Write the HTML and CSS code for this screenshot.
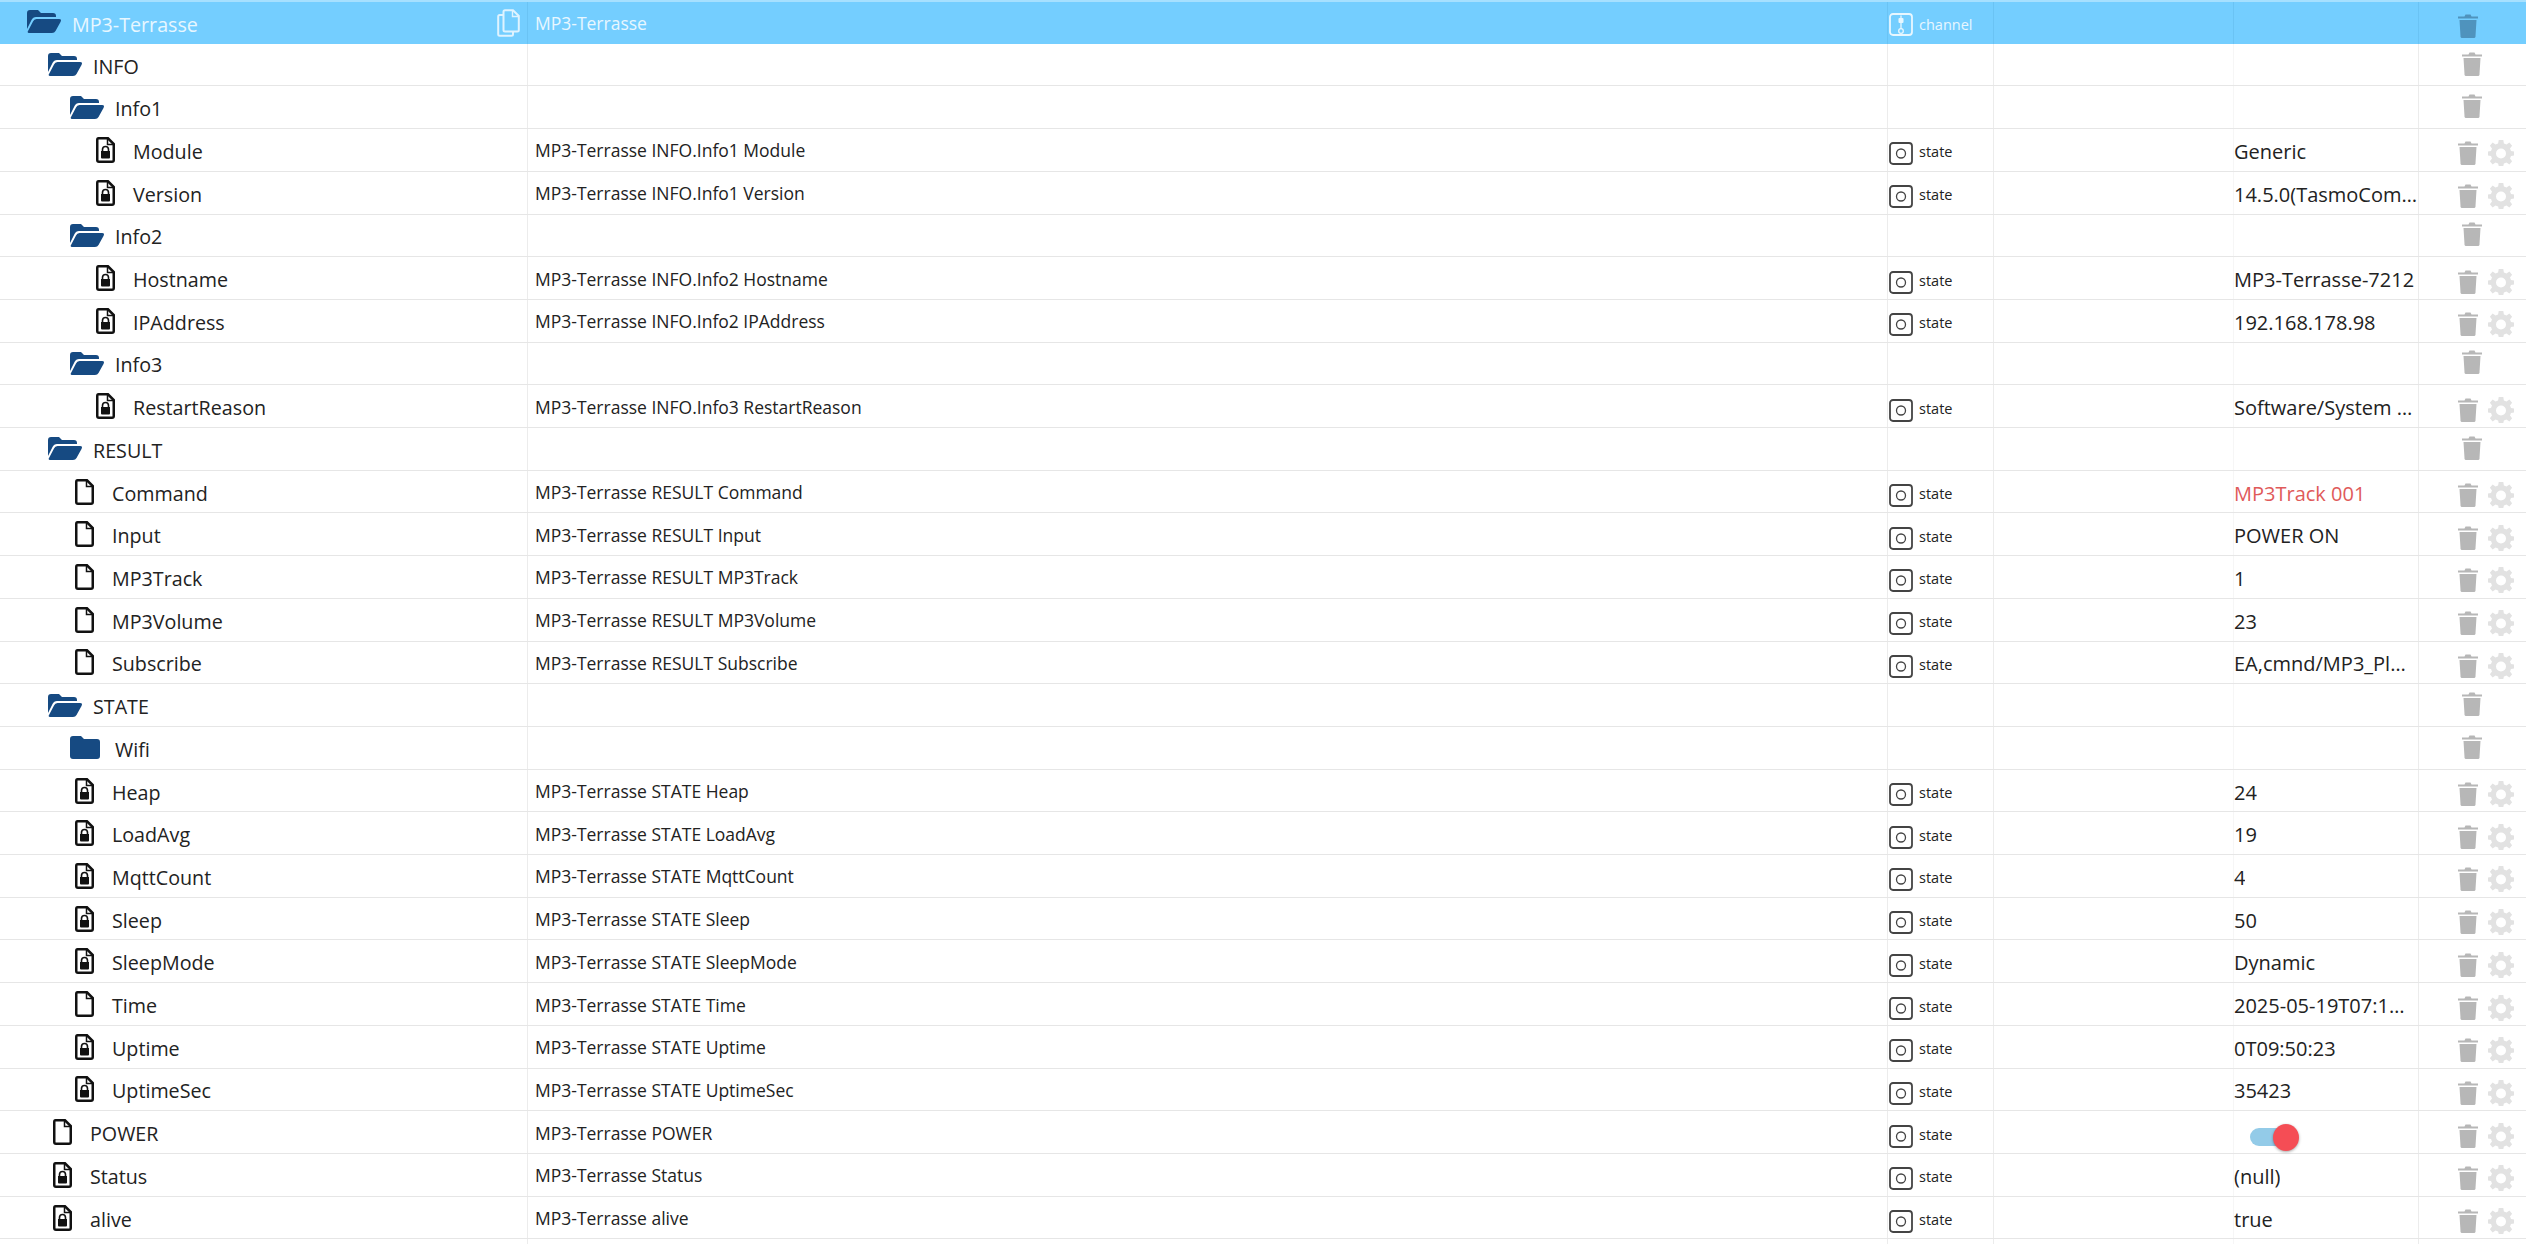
FILE: index.html
```html
<!DOCTYPE html>
<html lang="en">
<head>
<meta charset="utf-8">
<title>Objects</title>
<link rel="stylesheet" href="styles.css">
</head>
<body>
<svg class="defs" width="0" height="0" aria-hidden="true">
  <symbol id="folder-open" viewBox="0 0 34 23"><path d="M0 3Q0 0 3 0H11L14 3H26Q29 3 29 6V7H9Q6 7 4.500 10L0 19Z"/><path d="M9.500 9H32Q35 9 33.500 12L28.500 21Q27.500 23 25 23H2Q0 23 1 21L6 11.500Q7 9 9.500 9Z"/></symbol>
  <symbol id="folder" viewBox="0 0 30 23"><path d="M0 3Q0 0 3 0H11L14 3H27Q30 3 30 6V20Q30 23 27 23H3Q0 23 0 20Z"/></symbol>
  <symbol id="file" viewBox="0 0 19 26"><path d="M2.500 1.250H12L17.750 7V23Q17.750 24.750 16 24.750H3Q1.250 24.750 1.250 23V3Q1.250 1.250 2.500 1.250Z" fill="none" stroke="currentColor" stroke-width="2.500"/><path d="M11.500 1.500V7.500H17.500" fill="none" stroke="currentColor" stroke-width="1.500"/></symbol>
  <symbol id="file-lock" viewBox="0 0 19 26"><path d="M2.500 1.250H12L17.750 7V23Q17.750 24.750 16 24.750H3Q1.250 24.750 1.250 23V3Q1.250 1.250 2.500 1.250Z" fill="none" stroke="currentColor" stroke-width="2.500"/><path d="M11.500 1.500V7.500H17.500" fill="none" stroke="currentColor" stroke-width="1.500"/><path d="M6.500 14V12.500Q6.500 9.500 9.500 9.500T12.500 12.500V14" fill="none" stroke="currentColor" stroke-width="1.600"/><path d="M5 14H14V20.500Q14 21.500 13 21.500H6Q5 21.500 5 20.500Z"/></symbol>
  <symbol id="state" viewBox="0 0 24 23"><rect x="1" y="1" width="22" height="21" rx="3" fill="none" stroke="currentColor" stroke-width="1.800"/><ellipse cx="12" cy="11.500" rx="4.500" ry="4.500" fill="none" stroke="currentColor" stroke-width="1.300"/></symbol>
  <symbol id="channel" viewBox="0 0 24 23"><rect x="1" y="1" width="22" height="21" rx="3" fill="none" stroke="currentColor" stroke-width="1.800"/><path d="M12 2.500V16" fill="none" stroke="currentColor" stroke-width="1.300"/><rect x="9.500" y="5" width="5" height="5" rx="1"/><circle cx="12" cy="18" r="2.300" fill="none" stroke="currentColor" stroke-width="1.300"/></symbol>
  <symbol id="trash" viewBox="0 0 20 25"><path d="M0 3.500H6.500L7.500 1.500H12.500L13.500 3.500H20V5.500H0Z"/><path d="M1.500 7H18.500L17.500 23.500Q17.400 25 16 25H4Q2.600 25 2.500 23.500Z"/></symbol>
  <symbol id="gear" viewBox="0 0 26 26"><path fill-rule="evenodd" d="M10.700 0H15.300L15.900 3.500 18.500 4.600 21.400 2.500 24.100 5.700 22 8.500 23 11 26 11.500V15.500L23 16 22 18.500 24.100 21.300 21.400 24.500 18.500 22.400 15.900 23.500 15.300 26H10.700L10.100 23.500 7.500 22.400 4.600 24.500 1.900 21.300 4 18.500 3 16 0 15.500V11.500L3 11 4 8.500 1.900 5.700 4.600 2.500 7.500 4.600 10.100 3.500ZM13 8.500A5 5 0 1 0 13 18.500 5 5 0 1 0 13 8.500Z"/></symbol>
  <symbol id="copy" viewBox="0 0 23 28"><path d="M8 1.200H16L21.800 7V21Q21.800 22.500 20.300 22.500H8Q6.500 22.500 6.500 21V2.700Q6.500 1.200 8 1.200Z" fill="none" stroke="currentColor" stroke-width="2"/><path d="M15.500 1.500V7.500H21.500" fill="none" stroke="currentColor" stroke-width="1.400"/><path d="M6.500 6H2.700Q1.200 6 1.200 7.500V25.300Q1.200 26.800 2.700 26.800H14.500Q16 26.800 16 25.300V22.500" fill="none" stroke="currentColor" stroke-width="2"/></symbol>
</svg>
<main class="tree">
  <div class="row row-selected">
    <div class="cell cell-name lvl-0"><svg class="ico ico-folder-open"><use href="#folder-open"/></svg><span>MP3-Terrasse</span><svg class="ico ico-copy"><use href="#copy"/></svg></div>
    <div class="cell cell-desc">MP3-Terrasse</div>
    <div class="cell cell-type"><svg class="ico ico-type"><use href="#channel"/></svg><span>channel</span></div>
    <div class="cell"></div><div class="cell"></div>
    <div class="cell cell-act"><svg class="ico ico-trash"><use href="#trash"/></svg></div>
  </div>
  <div class="row">
    <div class="cell cell-name lvl-1"><svg class="ico ico-folder-open"><use href="#folder-open"/></svg><span>INFO</span></div>
    <div class="cell"></div><div class="cell"></div><div class="cell"></div><div class="cell"></div>
    <div class="cell cell-act cell-act-folder"><svg class="ico ico-trash"><use href="#trash"/></svg></div>
  </div>
  <div class="row">
    <div class="cell cell-name lvl-2"><svg class="ico ico-folder-open"><use href="#folder-open"/></svg><span>Info1</span></div>
    <div class="cell"></div><div class="cell"></div><div class="cell"></div><div class="cell"></div>
    <div class="cell cell-act cell-act-folder"><svg class="ico ico-trash"><use href="#trash"/></svg></div>
  </div>
  <div class="row">
    <div class="cell cell-name file-3"><svg class="ico ico-file"><use href="#file-lock"/></svg><span>Module</span></div>
    <div class="cell cell-desc">MP3-Terrasse INFO.Info1 Module</div>
    <div class="cell cell-type"><svg class="ico ico-type"><use href="#state"/></svg><span>state</span></div>
    <div class="cell"></div><div class="cell cell-val"><span>Generic</span></div>
    <div class="cell cell-act"><svg class="ico ico-trash"><use href="#trash"/></svg><svg class="ico ico-gear"><use href="#gear"/></svg></div>
  </div>
  <div class="row">
    <div class="cell cell-name file-3"><svg class="ico ico-file"><use href="#file-lock"/></svg><span>Version</span></div>
    <div class="cell cell-desc">MP3-Terrasse INFO.Info1 Version</div>
    <div class="cell cell-type"><svg class="ico ico-type"><use href="#state"/></svg><span>state</span></div>
    <div class="cell"></div><div class="cell cell-val"><span>14.5.0(TasmoCompiled)</span></div>
    <div class="cell cell-act"><svg class="ico ico-trash"><use href="#trash"/></svg><svg class="ico ico-gear"><use href="#gear"/></svg></div>
  </div>
  <div class="row">
    <div class="cell cell-name lvl-2"><svg class="ico ico-folder-open"><use href="#folder-open"/></svg><span>Info2</span></div>
    <div class="cell"></div><div class="cell"></div><div class="cell"></div><div class="cell"></div>
    <div class="cell cell-act cell-act-folder"><svg class="ico ico-trash"><use href="#trash"/></svg></div>
  </div>
  <div class="row">
    <div class="cell cell-name file-3"><svg class="ico ico-file"><use href="#file-lock"/></svg><span>Hostname</span></div>
    <div class="cell cell-desc">MP3-Terrasse INFO.Info2 Hostname</div>
    <div class="cell cell-type"><svg class="ico ico-type"><use href="#state"/></svg><span>state</span></div>
    <div class="cell"></div><div class="cell cell-val"><span>MP3-Terrasse-7212</span></div>
    <div class="cell cell-act"><svg class="ico ico-trash"><use href="#trash"/></svg><svg class="ico ico-gear"><use href="#gear"/></svg></div>
  </div>
  <div class="row">
    <div class="cell cell-name file-3"><svg class="ico ico-file"><use href="#file-lock"/></svg><span>IPAddress</span></div>
    <div class="cell cell-desc">MP3-Terrasse INFO.Info2 IPAddress</div>
    <div class="cell cell-type"><svg class="ico ico-type"><use href="#state"/></svg><span>state</span></div>
    <div class="cell"></div><div class="cell cell-val"><span>192.168.178.98</span></div>
    <div class="cell cell-act"><svg class="ico ico-trash"><use href="#trash"/></svg><svg class="ico ico-gear"><use href="#gear"/></svg></div>
  </div>
  <div class="row">
    <div class="cell cell-name lvl-2"><svg class="ico ico-folder-open"><use href="#folder-open"/></svg><span>Info3</span></div>
    <div class="cell"></div><div class="cell"></div><div class="cell"></div><div class="cell"></div>
    <div class="cell cell-act cell-act-folder"><svg class="ico ico-trash"><use href="#trash"/></svg></div>
  </div>
  <div class="row">
    <div class="cell cell-name file-3"><svg class="ico ico-file"><use href="#file-lock"/></svg><span>RestartReason</span></div>
    <div class="cell cell-desc">MP3-Terrasse INFO.Info3 RestartReason</div>
    <div class="cell cell-type"><svg class="ico ico-type"><use href="#state"/></svg><span>state</span></div>
    <div class="cell"></div><div class="cell cell-val"><span>Software/System restart</span></div>
    <div class="cell cell-act"><svg class="ico ico-trash"><use href="#trash"/></svg><svg class="ico ico-gear"><use href="#gear"/></svg></div>
  </div>
  <div class="row">
    <div class="cell cell-name lvl-1"><svg class="ico ico-folder-open"><use href="#folder-open"/></svg><span>RESULT</span></div>
    <div class="cell"></div><div class="cell"></div><div class="cell"></div><div class="cell"></div>
    <div class="cell cell-act cell-act-folder"><svg class="ico ico-trash"><use href="#trash"/></svg></div>
  </div>
  <div class="row">
    <div class="cell cell-name file-2"><svg class="ico ico-file"><use href="#file"/></svg><span>Command</span></div>
    <div class="cell cell-desc">MP3-Terrasse RESULT Command</div>
    <div class="cell cell-type"><svg class="ico ico-type"><use href="#state"/></svg><span>state</span></div>
    <div class="cell"></div><div class="cell cell-val cell-val-alert"><span>MP3Track 001</span></div>
    <div class="cell cell-act"><svg class="ico ico-trash"><use href="#trash"/></svg><svg class="ico ico-gear"><use href="#gear"/></svg></div>
  </div>
  <div class="row">
    <div class="cell cell-name file-2"><svg class="ico ico-file"><use href="#file"/></svg><span>Input</span></div>
    <div class="cell cell-desc">MP3-Terrasse RESULT Input</div>
    <div class="cell cell-type"><svg class="ico ico-type"><use href="#state"/></svg><span>state</span></div>
    <div class="cell"></div><div class="cell cell-val"><span>POWER ON</span></div>
    <div class="cell cell-act"><svg class="ico ico-trash"><use href="#trash"/></svg><svg class="ico ico-gear"><use href="#gear"/></svg></div>
  </div>
  <div class="row">
    <div class="cell cell-name file-2"><svg class="ico ico-file"><use href="#file"/></svg><span>MP3Track</span></div>
    <div class="cell cell-desc">MP3-Terrasse RESULT MP3Track</div>
    <div class="cell cell-type"><svg class="ico ico-type"><use href="#state"/></svg><span>state</span></div>
    <div class="cell"></div><div class="cell cell-val"><span>1</span></div>
    <div class="cell cell-act"><svg class="ico ico-trash"><use href="#trash"/></svg><svg class="ico ico-gear"><use href="#gear"/></svg></div>
  </div>
  <div class="row">
    <div class="cell cell-name file-2"><svg class="ico ico-file"><use href="#file"/></svg><span>MP3Volume</span></div>
    <div class="cell cell-desc">MP3-Terrasse RESULT MP3Volume</div>
    <div class="cell cell-type"><svg class="ico ico-type"><use href="#state"/></svg><span>state</span></div>
    <div class="cell"></div><div class="cell cell-val"><span>23</span></div>
    <div class="cell cell-act"><svg class="ico ico-trash"><use href="#trash"/></svg><svg class="ico ico-gear"><use href="#gear"/></svg></div>
  </div>
  <div class="row">
    <div class="cell cell-name file-2"><svg class="ico ico-file"><use href="#file"/></svg><span>Subscribe</span></div>
    <div class="cell cell-desc">MP3-Terrasse RESULT Subscribe</div>
    <div class="cell cell-type"><svg class="ico ico-type"><use href="#state"/></svg><span>state</span></div>
    <div class="cell"></div><div class="cell cell-val cell-val-tight"><span>EA,cmnd/MP3_Player/POWER</span></div>
    <div class="cell cell-act"><svg class="ico ico-trash"><use href="#trash"/></svg><svg class="ico ico-gear"><use href="#gear"/></svg></div>
  </div>
  <div class="row">
    <div class="cell cell-name lvl-1"><svg class="ico ico-folder-open"><use href="#folder-open"/></svg><span>STATE</span></div>
    <div class="cell"></div><div class="cell"></div><div class="cell"></div><div class="cell"></div>
    <div class="cell cell-act cell-act-folder"><svg class="ico ico-trash"><use href="#trash"/></svg></div>
  </div>
  <div class="row">
    <div class="cell cell-name lvl-2"><svg class="ico ico-folder"><use href="#folder"/></svg><span>Wifi</span></div>
    <div class="cell"></div><div class="cell"></div><div class="cell"></div><div class="cell"></div>
    <div class="cell cell-act cell-act-folder"><svg class="ico ico-trash"><use href="#trash"/></svg></div>
  </div>
  <div class="row">
    <div class="cell cell-name file-2"><svg class="ico ico-file"><use href="#file-lock"/></svg><span>Heap</span></div>
    <div class="cell cell-desc">MP3-Terrasse STATE Heap</div>
    <div class="cell cell-type"><svg class="ico ico-type"><use href="#state"/></svg><span>state</span></div>
    <div class="cell"></div><div class="cell cell-val"><span>24</span></div>
    <div class="cell cell-act"><svg class="ico ico-trash"><use href="#trash"/></svg><svg class="ico ico-gear"><use href="#gear"/></svg></div>
  </div>
  <div class="row">
    <div class="cell cell-name file-2"><svg class="ico ico-file"><use href="#file-lock"/></svg><span>LoadAvg</span></div>
    <div class="cell cell-desc">MP3-Terrasse STATE LoadAvg</div>
    <div class="cell cell-type"><svg class="ico ico-type"><use href="#state"/></svg><span>state</span></div>
    <div class="cell"></div><div class="cell cell-val"><span>19</span></div>
    <div class="cell cell-act"><svg class="ico ico-trash"><use href="#trash"/></svg><svg class="ico ico-gear"><use href="#gear"/></svg></div>
  </div>
  <div class="row">
    <div class="cell cell-name file-2"><svg class="ico ico-file"><use href="#file-lock"/></svg><span>MqttCount</span></div>
    <div class="cell cell-desc">MP3-Terrasse STATE MqttCount</div>
    <div class="cell cell-type"><svg class="ico ico-type"><use href="#state"/></svg><span>state</span></div>
    <div class="cell"></div><div class="cell cell-val"><span>4</span></div>
    <div class="cell cell-act"><svg class="ico ico-trash"><use href="#trash"/></svg><svg class="ico ico-gear"><use href="#gear"/></svg></div>
  </div>
  <div class="row">
    <div class="cell cell-name file-2"><svg class="ico ico-file"><use href="#file-lock"/></svg><span>Sleep</span></div>
    <div class="cell cell-desc">MP3-Terrasse STATE Sleep</div>
    <div class="cell cell-type"><svg class="ico ico-type"><use href="#state"/></svg><span>state</span></div>
    <div class="cell"></div><div class="cell cell-val"><span>50</span></div>
    <div class="cell cell-act"><svg class="ico ico-trash"><use href="#trash"/></svg><svg class="ico ico-gear"><use href="#gear"/></svg></div>
  </div>
  <div class="row">
    <div class="cell cell-name file-2"><svg class="ico ico-file"><use href="#file-lock"/></svg><span>SleepMode</span></div>
    <div class="cell cell-desc">MP3-Terrasse STATE SleepMode</div>
    <div class="cell cell-type"><svg class="ico ico-type"><use href="#state"/></svg><span>state</span></div>
    <div class="cell"></div><div class="cell cell-val"><span>Dynamic</span></div>
    <div class="cell cell-act"><svg class="ico ico-trash"><use href="#trash"/></svg><svg class="ico ico-gear"><use href="#gear"/></svg></div>
  </div>
  <div class="row">
    <div class="cell cell-name file-2"><svg class="ico ico-file"><use href="#file"/></svg><span>Time</span></div>
    <div class="cell cell-desc">MP3-Terrasse STATE Time</div>
    <div class="cell cell-type"><svg class="ico ico-type"><use href="#state"/></svg><span>state</span></div>
    <div class="cell"></div><div class="cell cell-val cell-val-tight"><span>2025-05-19T07:13:25</span></div>
    <div class="cell cell-act"><svg class="ico ico-trash"><use href="#trash"/></svg><svg class="ico ico-gear"><use href="#gear"/></svg></div>
  </div>
  <div class="row">
    <div class="cell cell-name file-2"><svg class="ico ico-file"><use href="#file-lock"/></svg><span>Uptime</span></div>
    <div class="cell cell-desc">MP3-Terrasse STATE Uptime</div>
    <div class="cell cell-type"><svg class="ico ico-type"><use href="#state"/></svg><span>state</span></div>
    <div class="cell"></div><div class="cell cell-val"><span>0T09:50:23</span></div>
    <div class="cell cell-act"><svg class="ico ico-trash"><use href="#trash"/></svg><svg class="ico ico-gear"><use href="#gear"/></svg></div>
  </div>
  <div class="row">
    <div class="cell cell-name file-2"><svg class="ico ico-file"><use href="#file-lock"/></svg><span>UptimeSec</span></div>
    <div class="cell cell-desc">MP3-Terrasse STATE UptimeSec</div>
    <div class="cell cell-type"><svg class="ico ico-type"><use href="#state"/></svg><span>state</span></div>
    <div class="cell"></div><div class="cell cell-val"><span>35423</span></div>
    <div class="cell cell-act"><svg class="ico ico-trash"><use href="#trash"/></svg><svg class="ico ico-gear"><use href="#gear"/></svg></div>
  </div>
  <div class="row">
    <div class="cell cell-name file-1"><svg class="ico ico-file"><use href="#file"/></svg><span>POWER</span></div>
    <div class="cell cell-desc">MP3-Terrasse POWER</div>
    <div class="cell cell-type"><svg class="ico ico-type"><use href="#state"/></svg><span>state</span></div>
    <div class="cell"></div><div class="cell cell-val"><div class="toggle"><div class="toggle-knob"></div></div></div>
    <div class="cell cell-act"><svg class="ico ico-trash"><use href="#trash"/></svg><svg class="ico ico-gear"><use href="#gear"/></svg></div>
  </div>
  <div class="row">
    <div class="cell cell-name file-1"><svg class="ico ico-file"><use href="#file-lock"/></svg><span>Status</span></div>
    <div class="cell cell-desc">MP3-Terrasse Status</div>
    <div class="cell cell-type"><svg class="ico ico-type"><use href="#state"/></svg><span>state</span></div>
    <div class="cell"></div><div class="cell cell-val"><span>(null)</span></div>
    <div class="cell cell-act"><svg class="ico ico-trash"><use href="#trash"/></svg><svg class="ico ico-gear"><use href="#gear"/></svg></div>
  </div>
  <div class="row">
    <div class="cell cell-name file-1"><svg class="ico ico-file"><use href="#file-lock"/></svg><span>alive</span></div>
    <div class="cell cell-desc">MP3-Terrasse alive</div>
    <div class="cell cell-type"><svg class="ico ico-type"><use href="#state"/></svg><span>state</span></div>
    <div class="cell"></div><div class="cell cell-val"><span>true</span></div>
    <div class="cell cell-act"><svg class="ico ico-trash"><use href="#trash"/></svg><svg class="ico ico-gear"><use href="#gear"/></svg></div>
  </div>
  <div class="row">
    <div class="cell"></div><div class="cell"></div><div class="cell"></div><div class="cell"></div><div class="cell"></div><div class="cell"></div>
  </div>
</main>
</body>
</html>
```

FILE: styles.css
```css
* { box-sizing: border-box; }
html, body { margin: 0; height: 100%; overflow: hidden; background: #fff; }
body { font-family: "Open Sans", "Noto Sans", sans-serif; color: #222; }
.defs { position: absolute; }
.tree { display: flex; flex-direction: column; }
.row {
  display: grid;
  grid-template-columns: 528px 1360px 106px 240px 185px 107px;
  height: 42.71px;
  flex: none;
  border-bottom: 1px solid #e6e6e6;
}
.cell { display: flex; align-items: center; min-width: 0; border-right: 1px solid #ececec; }
.cell:nth-child(4) { border-right-color: #f6f6f6; }
.cell:last-child { border-right: 0; }
.cell-name { font-size: 19.7px; }
.cell-name > span { white-space: nowrap; padding-top: 3px; }
.lvl-0 { padding-left: 27px; }
.lvl-1 { padding-left: 48px; }
.lvl-2 { padding-left: 70px; }
.file-1 { padding-left: 53px; }
.file-2 { padding-left: 75px; }
.file-3 { padding-left: 96px; }
.ico { flex: none; fill: currentColor; }
.ico-folder-open { width: 34px; height: 23px; margin-right: 11px; color: #164a82; }
.ico-folder { width: 30px; height: 23px; margin-right: 15px; color: #164a82; }
.ico-file { width: 19px; height: 26px; margin-right: 18px; color: #111; }
.ico-copy { width: 23px; height: 28px; margin-left: auto; margin-right: 7px; color: #dff3ff; }
.cell-desc { padding-left: 7px; padding-top: 1px; font-size: 17.5px; }
.cell-type { padding-left: 1px; font-size: 14.5px; }
.cell-type > span { padding-top: 4px; }
.ico-type { width: 24px; height: 23px; margin-top: 8px; margin-right: 6px; color: #444; }
.cell-val { font-size: 20px; min-width: 0; }
.cell-val-tight { padding-right: 11px; }
.cell-val > span { overflow: hidden; text-overflow: ellipsis; white-space: nowrap; padding-top: 3px; }
.cell-val-alert { color: #e05a5a; }
.cell-act { justify-content: flex-start; padding-left: 39px; gap: 10px; }
.cell-act-folder { padding-left: 43px; }
.ico-trash { width: 20px; height: 25px; margin-top: 6px; color: #b7b7b7; }
.cell-act-folder .ico-trash { margin-top: 0; margin-bottom: 3px; }
.ico-gear { width: 26px; height: 26px; margin-top: 7px; color: #e2e2e2; }
.row-selected { height: 43.71px; background: #74ceff; color: #e8f7ff; border-top: 2px solid #a6e0ff; border-bottom: 0; }
.row-selected .cell { border-right-color: #6ac3f4; }
.row-selected .ico-trash { color: #4f93bd; }
.row-selected .ico-folder-open { margin-bottom: 2px; color: #164a82; }
.row-selected .ico-type { color: #e8f7ff; margin-top: 4px; }
.toggle { position: relative; width: 40px; height: 18px; margin-top: 10px; margin-left: 16px; border-radius: 9px; background: #93cbe8; }
.toggle-knob { position: absolute; top: -4px; right: -9px; width: 26px; height: 27px; border-radius: 50%; background: #f54d55; box-shadow: 0 1px 3px rgba(0,0,0,.35); }
```
